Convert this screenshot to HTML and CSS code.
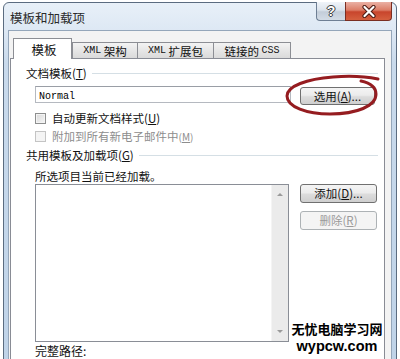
FILE: index.html
```html
<!DOCTYPE html>
<html lang="zh">
<head>
<meta charset="utf-8">
<title>模板和加载项</title>
<link rel="stylesheet" href="styles.css">
</head>
<body>
<div class="window">
  <div class="titlebar">
    <div class="title">模板和加载项</div>
    <div class="caption-btns">
      <div class="cap help"><span>?</span></div>
      <div class="cap close">
        <svg width="14" height="13" viewBox="0 0 14 13"><path d="M2.5 2 L11.5 11 M11.5 2 L2.5 11" stroke="#4a1a12" stroke-width="4.2" stroke-linecap="round"/><path d="M2.5 2 L11.5 11 M11.5 2 L2.5 11" stroke="#fff" stroke-width="2.2" stroke-linecap="round"/></svg>
      </div>
    </div>
  </div>
  <div class="client">
    <div class="tabs">
      <div class="tab active">模板</div>
      <div class="tab t1"><span class="mono">XML</span> 架构</div>
      <div class="tab t2"><span class="mono">XML</span> 扩展包</div>
      <div class="tab t3">链接的 <span class="mono">CSS</span></div>
    </div>
    <div class="panel">
      <div class="group"><span>文档模板(<u>T</u>)</span><i class="rule"></i></div>
      <div class="row tpl">
        <div class="textbox"><span class="mono">Normal</span></div>
        <div class="btn sel">选用(<u>A</u>)...</div>
      </div>
      <div class="check"><span class="box"></span><span>自动更新文档样式(<u>U</u>)</span></div>
      <div class="check disabled"><span class="box"></span><span>附加到所有新电子邮件中<span class="small">(<u>M</u>)</span></span></div>
      <div class="group g2"><span>共用模板及加载项(<u>G</u>)</span><i class="rule"></i></div>
      <div class="note">所选项目当前已经加载。</div>
      <div class="row lists">
        <div class="listbox">
          <div class="list"></div>
          <div class="sb"><i class="up"></i><i class="down"></i></div>
        </div>
        <div class="btncol">
          <div class="btn add">添加(<u>D</u>)...</div>
          <div class="btn off">删除(<u>R</u>)</div>
        </div>
      </div>
      <div class="path">完整路径:</div>
    </div>
  </div>
</div>
<svg class="circle" width="100" height="48" viewBox="0 0 100 48"><path d="M96 7 Q76 3 51 5 C25 7 5 14 5 24 C5 35 25 42 48 42 C75 42 94 34 94 22 C94 15 88 11 79 9" fill="none" stroke="#951c20" stroke-width="3" stroke-linecap="round"/></svg>
<div class="watermark"><div class="wm1">无忧电脑学习网</div><div class="wm2">wypcw.com</div></div>
</body>
</html>
```

FILE: styles.css
```css
html, body {
  margin: 0;
  padding: 0;
}
body {
  width: 400px;
  height: 359px;
  overflow: hidden;
  background: #fff;
  position: relative;
  font-family: "Noto Sans CJK SC", "Noto Sans", sans-serif;
  color: #111;
}
u { text-decoration: underline; text-underline-offset: 1px; }
.mono { font-family: "Liberation Mono", monospace; font-size: 10px; }

.window {
  margin: 2px 0 0 3px;
  width: 394px;
  height: 372px;
  box-sizing: border-box;
  border: 1px solid #5b6c80;
  border-radius: 6px 6px 0 0;
  background: linear-gradient(#e8f0f8 0, #dde8f4 28px, #c9daec 60px, #bfd3e8 100%);
  padding: 0 4px;
}
.titlebar {
  height: 27px;
  display: flex;
  justify-content: space-between;
  align-items: flex-start;
}
.title {
  padding: 7px 0 0 2px;
  font-size: 12.5px;
  line-height: 15px;
  color: #2a2a2a;
}
.caption-btns {
  display: flex;
  margin-top: -1px;
}
.cap {
  height: 19px;
  box-sizing: border-box;
  display: flex;
  align-items: center;
  justify-content: center;
}
.help {
  width: 29px;
  border: 1px solid #6e7f94;
  border-right: none;
  border-top: none;
  border-radius: 0 0 0 4px;
  background: linear-gradient(#f0f4f9 0, #dbe3ec 45%, #c3cdd9 55%, #d3dce6 100%);
}
.help span {
  font-family: "Liberation Sans", sans-serif;
  font-weight: bold;
  font-size: 14px;
  line-height: 14px;
  color: #fff;
  text-shadow: 0 0 1px #333, 1px 0 0 #444, -1px 0 0 #444, 0 1px 0 #444, 0 -1px 0 #444;
}
.close {
  width: 47px;
  border: 1px solid #7a2e22;
  border-top: none;
  border-radius: 0 0 4px 0;
  background: linear-gradient(#eab1a4 0, #dc7d67 45%, #c8452c 55%, #d5603f 100%);
}

.client {
  height: 330px;
  border: 1px solid #94a6ba;
  border-bottom: none;
  background: #f3f3f3;
  padding: 0 0 0 1px;
}
.tabs {
  height: 20px;
  padding-top: 7px;
  padding-left: 3px;
  display: flex;
  align-items: flex-end;
}
.tab {
  box-sizing: border-box;
  height: 16px;
  border: 1px solid #8c8e94;
  border-bottom: none;
  background: linear-gradient(#f3f3f3, #e6e6e6 50%, #dadada);
  font-size: 11.5px;
  line-height: 14px;
  display: flex;
  justify-content: center;
  align-items: center;
  white-space: pre;
}
.tab.active {
  width: 59px;
  height: 21px;
  margin-bottom: -1px;
  position: relative;
  z-index: 1;
  background: #fff;
  font-size: 12.5px;
  padding-top: 2px;
  padding-left: 3px;
}
.t1 { width: 66px; }
.t2 { width: 77px; margin-left: -1px; }
.t3 { width: 78px; margin-left: -1px; }

.panel {
  width: 375px;
  height: 310px;
  box-sizing: border-box;
  border: 1px solid #898c95;
  background: #fff;
  padding-top: 7px;
  font-size: 11.5px;
}
.group {
  height: 14px;
  line-height: 14px;
  display: flex;
  align-items: center;
  padding: 0 6px 0 15px;
}
.group .rule {
  flex: 1;
  height: 1px;
  background: #d5dfe5;
  margin-left: 5px;
}
.g2 { margin-top: 5px; }
.row { display: flex; align-items: flex-start; }
.tpl { margin: 6px 0 0 24px; }
.textbox {
  width: 256px;
  height: 17px;
  box-sizing: border-box;
  border: 1px solid #b5b9c0;
  border-top-color: #9a9ea6;
  padding-left: 3px;
  line-height: 15px;
  color: #000;
}
.btn {
  box-sizing: border-box;
  border: 1px solid #707070;
  border-radius: 3px;
  background: linear-gradient(#f4f4f4 0, #ececec 45%, #dcdcdc 55%, #cfcfcf 100%);
  text-align: center;
  color: #111;
}
.sel {
  width: 75px;
  height: 18px;
  line-height: 16px;
  margin: 1px 0 0 9px;
}
.check {
  display: flex;
  align-items: center;
  height: 14px;
  line-height: 14px;
  margin: 6px 0 0 24px;
}
.check + .check { margin-top: 4px; }
.box {
  width: 11px;
  height: 11px;
  box-sizing: border-box;
  border: 1px solid #8e8f8f;
  background: linear-gradient(135deg, #d9d9d9, #f6f6f6);
  margin-right: 6px;
  box-shadow: inset 0 0 0 1px #f4f4f4;
}
.check.disabled { color: #8d8d8d; }
.check.disabled .box {
  border-color: #c4c4c4;
  background: #f4f4f4;
}
.small { font-size: 10px; }
.note {
  margin: 7px 0 0 24px;
  height: 14px;
  line-height: 14px;
}
.lists { margin: 1px 0 0 24px; }
.listbox {
  width: 254px;
  height: 158px;
  box-sizing: border-box;
  border: 1px solid #8a8e96;
  display: flex;
}
.list { flex: 1; background: #fff; }
.sb {
  width: 16px;
  background: #ebebeb;
  border-left: 1px solid #f4f4f4;
  display: flex;
  flex-direction: column;
  justify-content: space-between;
  align-items: center;
  padding: 8px 0 8px;
}
.sb i {
  width: 0;
  height: 0;
  border-left: 3px solid transparent;
  border-right: 3px solid transparent;
}
.sb .up { border-bottom: 3px solid #9a9a9a; }
.sb .down { border-top: 3px solid #9a9a9a; }
.btncol {
  margin-left: 11px;
  display: flex;
  flex-direction: column;
  gap: 8px;
}
.btncol .btn {
  width: 77px;
  height: 19px;
  line-height: 17px;
}
.btn.off {
  border-color: #adb2b5;
  background: #f4f4f4;
  color: #9a9a9a;
}
.path {
  margin: 2px 0 0 24px;
  height: 14px;
  line-height: 14px;
  font-size: 12px;
}

.circle {
  position: absolute;
  left: 282px;
  top: 72px;
}
.watermark {
  position: absolute;
  left: 286px;
  top: 322px;
  width: 102px;
  text-align: center;
  color: #000;
  font-weight: bold;
  display: flex;
  flex-direction: column;
}
.wm1 {
  font-family: "Noto Sans CJK SC", sans-serif;
  font-size: 13px;
  line-height: 13px;
  height: 13px;
  white-space: nowrap;
}
.wm2 {
  font-family: "Liberation Sans", sans-serif;
  font-size: 14.5px;
  line-height: 12px;
  height: 12px;
  margin-top: 5px;
}
```
